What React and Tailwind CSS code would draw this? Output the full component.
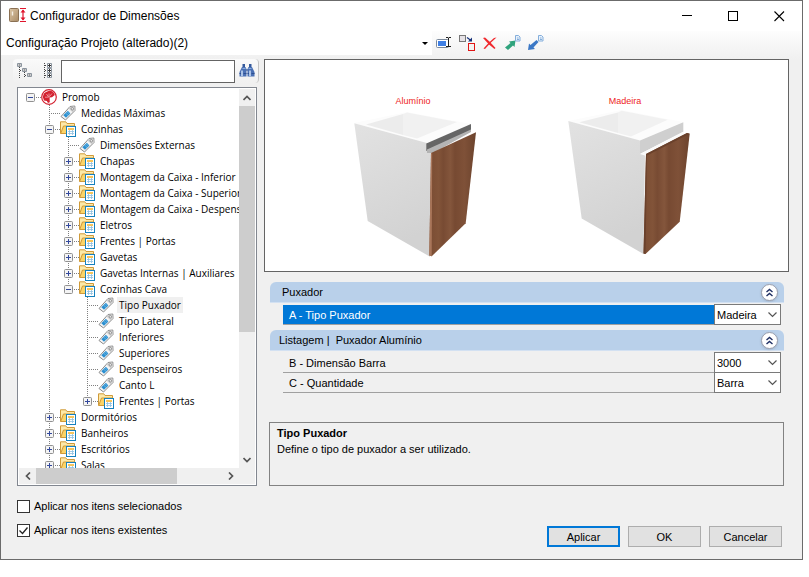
import React from 'react';
import clsx from 'clsx';

const TREE = [
  { label: 'Promob', icon: 'brand', guides: [], state: 'open', root: true, last: true },
  { label: 'Medidas Máximas', icon: 'tag', guides: [false] },
  { label: 'Cozinhas', icon: 'folder', guides: [false], state: 'open' },
  { label: 'Dimensões Externas', icon: 'tag', guides: [false, true] },
  { label: 'Chapas', icon: 'folder', guides: [false, true], state: 'closed' },
  { label: 'Montagem da Caixa - Inferior', icon: 'folder', guides: [false, true], state: 'closed' },
  { label: 'Montagem da Caixa - Superior', icon: 'folder', guides: [false, true], state: 'closed' },
  { label: 'Montagem da Caixa - Despenseiro', icon: 'folder', guides: [false, true], state: 'closed' },
  { label: 'Eletros', icon: 'folder', guides: [false, true], state: 'closed' },
  { label: 'Frentes | Portas', icon: 'folder', guides: [false, true], state: 'closed' },
  { label: 'Gavetas', icon: 'folder', guides: [false, true], state: 'closed' },
  { label: 'Gavetas Internas | Auxiliares', icon: 'folder', guides: [false, true], state: 'closed' },
  { label: 'Cozinhas Cava', icon: 'folder', guides: [false, true], state: 'open', last: true },
  { label: 'Tipo Puxador', icon: 'tag', guides: [false, true, false], selected: true },
  { label: 'Tipo Lateral', icon: 'tag', guides: [false, true, false] },
  { label: 'Inferiores', icon: 'tag', guides: [false, true, false] },
  { label: 'Superiores', icon: 'tag', guides: [false, true, false] },
  { label: 'Despenseiros', icon: 'tag', guides: [false, true, false] },
  { label: 'Canto L', icon: 'tag', guides: [false, true, false] },
  { label: 'Frentes | Portas', icon: 'folder', guides: [false, true, false], state: 'closed', last: true },
  { label: 'Dormitórios', icon: 'folder', guides: [false], state: 'closed' },
  { label: 'Banheiros', icon: 'folder', guides: [false], state: 'closed' },
  { label: 'Escritórios', icon: 'folder', guides: [false], state: 'closed' },
  { label: 'Salas', icon: 'folder', guides: [false], state: 'closed' },
];

function AppIcon() {
  return (
    <svg width="18" height="18" viewBox="0 0 18 18" className="shrink-0">
      <defs>
        <linearGradient id="door" x1="0" y1="0" x2="1" y2="1">
          <stop offset="0" stopColor="#dcc6a6" />
          <stop offset="1" stopColor="#a98b66" />
        </linearGradient>
      </defs>
      <rect x="0.5" y="1.5" width="9" height="13" rx="1" fill="url(#door)" stroke="#8a7053" />
      <path d="M3.5 4.500v4" stroke="#f5efe4" strokeWidth="1.4" />
      <path d="M11 1.5h6M11 14.500h6M14 3v10" stroke="#e0142c" strokeWidth="1.200" />
      <path d="M11.500 5.500L14 2.500l2.500 3zM11.500 10.500l2.500 3 2.500-3z" fill="#e0142c" />
    </svg>
  );
}

function BrandIcon() {
  return (
    <svg width="16" height="16" viewBox="0 0 16 16" className="shrink-0">
      <circle cx="8" cy="8" r="7.300" fill="#fff" stroke="#d3202f" strokeWidth="1.200" />
      <path d="M7.500 2C10 1.200 13.500 3 13.800 6L11 8.200 8.600 8.500 8.800 13.200 7 14 5.800 12 3 11.500 1.800 8 2.800 4.500 5 3z" fill="#d3202f" />
      <path d="M8 4.500v4M5.500 5l2 3M4 8.200h3.500M11 4.500l-2.500 3" stroke="#f7b9bd" strokeWidth="0.700" />
    </svg>
  );
}

function TagIcon() {
  return (
    <svg width="16" height="16" viewBox="0 0 16 16" className="shrink-0">
      <path d="M10 1.500L14.800 1 15 5.500 5.500 15 1 11.500z" fill="#f4f4f4" stroke="#8a8a8a" />
      <path d="M10 2l4.300-.6.200 3.900-2 2L8.500 3.500z" fill="#d2d2d2" />
      <circle cx="12.300" cy="3.800" r="1.200" fill="#fff" stroke="#777" strokeWidth="0.800" />
      <path d="M7.800 5.800l2.600 2.600-4.400 4.300-2.700-2.500z" fill="#2b8fd0" />
      <path d="M5.500 8l2.800 2.600M7 6.700l2.600 2.500" stroke="#84c4ea" strokeWidth="0.700" />
    </svg>
  );
}

function FolderIcon() {
  return (
    <svg width="16" height="16" viewBox="0 0 16 16" className="shrink-0">
      <path d="M.5 12.500V.8h5.300l1.200 1.700h7.500v3" fill="#fde9a8" stroke="#cf9a3a" />
      <path d="M.7 12.500L3.500 5h11.500v7.500z" fill="#fbd467" stroke="#cf9a3a" />
      <rect x="6.500" y="5.500" width="9" height="10" fill="#fff" stroke="#1681bd" />
      <path d="M8 8h6" stroke="#f5b733" strokeWidth="1.600" />
      <path d="M8 10.500h6M8 12.500h6M9.500 9v5M12.500 9v5" stroke="#8fc0e0" strokeWidth="0.800" />
    </svg>
  );
}

function Expander({ open }) {
  return (
    <g>
      <rect x="5.500" y="4.500" width="8" height="8" rx="1" fill="#f4f4f4" stroke="#919191" />
      <path d={open ? 'M7 8.500h5' : 'M7 8.500h5M9.500 6v5'} stroke="#32489c" />
    </g>
  );
}

// One 16px line of the tree: guides of the parents, own connector, icon, label
function TreeRow({ item }) {
  const { label, icon, guides, state, last, root, selected } = item;
  return (
    <li className="flex h-4 items-center whitespace-nowrap">
      {guides.map((on, i) => (
        <svg key={i} width="19" height="16" className="shrink-0">
          {on && <path d="M9.500 0v16" stroke="#808080" strokeDasharray="1 1" />}
        </svg>
      ))}
      <svg width="20" height="16" className="shrink-0">
        {!root && <path d={last ? 'M9.500 0v8' : 'M9.500 0v16'} stroke="#808080" strokeDasharray="1 1" />}
        <path d="M9 8.500h11" stroke="#808080" strokeDasharray="1 1" />
        {state && <Expander open={state === 'open'} />}
      </svg>
      {icon === 'brand' && <BrandIcon />}
      {icon === 'tag' && <TagIcon />}
      {icon === 'folder' && <FolderIcon />}
      <span className={clsx('ml-[3px] px-[2px] leading-4', selected && 'bg-[#f0f0f0]')}>{label}</span>
    </li>
  );
}

function Chevron({ d, size = 8 }) {
  return (
    <svg width={size} height={size} viewBox="0 0 8 8" fill="none">
      <path d={d} stroke="#555" strokeWidth="1.700" />
    </svg>
  );
}

function TreePanel() {
  return (
    <div className="ml-[4px] mr-[2px] mt-[4px] border border-[#828790] bg-white p-px">
      <div className="flex h-[379px]">
        <ul className="min-w-0 flex-1 overflow-hidden pl-[2px] font-['Open_Sans','Liberation_Sans',sans-serif] text-[10px]">
          {TREE.map((item, i) => (
            <TreeRow key={i} item={item} />
          ))}
        </ul>
        <div className="flex w-4 flex-col items-center bg-[#f0f0f0]">
          <button aria-label="Subir" className="flex h-[17px] items-center">
            <Chevron d="M.5 6L4 2.500 7.500 6" />
          </button>
          <div className="h-[226px] w-full bg-[#cdcdcd]" />
          <button aria-label="Descer" className="mt-auto flex h-[17px] items-center">
            <Chevron d="M.5 2L4 5.500 7.500 2" />
          </button>
        </div>
      </div>
      <div className="flex h-4 items-center bg-[#f0f0f0] pr-4">
        <button aria-label="Esquerda" className="flex w-[17px] justify-center">
          <Chevron d="M6 .5L2.500 4 6 7.500" />
        </button>
        <div className="h-full w-[141px] bg-[#cdcdcd]" />
        <button aria-label="Direita" className="ml-auto flex w-[17px] justify-center">
          <Chevron d="M2 .5L5.500 4 2 7.500" />
        </button>
      </div>
    </div>
  );
}

function SearchBar() {
  return (
    <div className="flex h-6 items-center rounded-sm border-r border-[#c4c4c4] bg-gradient-to-b from-[#fafafa] to-[#f0f0f0] pl-[4px]">
      <button aria-label="Recolher tudo">
        <svg width="16" height="16" fill="none">
          <path d="M2.500 4v11M3 7.500h3M7.500 9v6M8 12.500h3" stroke="#444" strokeDasharray="1 1" />
          <path d="M.5.500h4v3h-4zM5.500 5.500h4v3h-4zM10.500 10.500h4v3h-4z" fill="#fff" stroke="#8b949e" />
          <path d="M1.500 2h2M6.500 7h2M11.500 12h2" stroke="#333" />
        </svg>
      </button>
      <button aria-label="Expandir tudo" className="ml-[10px]">
        <svg width="10" height="16" fill="none">
          <path d="M1.500 0v16M2 2.500h3M2 7.500h3M2 12.500h3" stroke="#444" strokeDasharray="1 1" />
          <path d="M4.500.500h4v4h-4zM4.500 5.500h4v4h-4zM4.500 10.500h4v4h-4z" fill="#fff" stroke="#8b949e" />
          <path d="M5 2.500h3M6.500 1v3M5 7.500h3M6.500 6v3M5 12.500h3M6.500 11v3" stroke="#333" />
        </svg>
      </button>
      <input aria-label="Pesquisar" className="ml-[8px] h-[23px] w-[174px] border border-[#646464] bg-white px-1 outline-none" />
      <button aria-label="Localizar" className="ml-[4px]">
        <svg width="16" height="16" viewBox="0 0 16 16">
          <path d="M3 4h3.500L7.500 6v7.500H.5V9zM9.500 4H13l2.500 5v4.500h-7V6z" fill="#4a70b4" />
          <path d="M3.500 1h2.500v3H3.500zM10 1h2.500v3H10z" fill="#34599c" />
          <path d="M3 7.500v5.500M11 7.500v5.500" stroke="#c3d7f3" strokeWidth="1.600" />
          <path d="M3.500 5.500h3M9.500 5.500h3" stroke="#8daee0" />
          <path d="M.5 10.500h1.500M4.500 10.500h3M8.500 10.500h1.500M12.500 10.500h3M7 7h2" stroke="#2d4f90" />
        </svg>
      </button>
    </div>
  );
}

function Toolbar() {
  return (
    <div className="flex h-[28px] items-start bg-gradient-to-b from-[#fdfdfd] to-[#f0f0f0]">
      <div className="relative h-[24px] w-[431px] bg-white">
        <select aria-label="Configuração" className="h-full w-full appearance-none bg-white pl-[5px] text-[12px] outline-none">
          <option>Configuração Projeto (alterado)(2)</option>
        </select>
        <svg width="6" height="3" className="pointer-events-none absolute right-1 top-[11px]">
          <path d="M0 0h6L3 3z" fill="#000" />
        </svg>
      </div>
      <div className="flex h-[24px] items-center gap-[7px] pl-[4px]">
        <button aria-label="Renomear">
          <svg width="16" height="16" fill="none">
            <rect x="0.500" y="4.500" width="12" height="8" rx="1" fill="#fff" stroke="#7c8a9c" />
            <rect x="2" y="6" width="8" height="5" fill="#3f7fe4" />
            <path d="M10 2.500h2l.500.500.500-.500h2M12.500 3v8M10 11.500h5" stroke="#222" />
          </svg>
        </button>
        <button aria-label="Duplicar">
          <svg width="16" height="16" fill="none">
            <rect x="0.500" y="0.500" width="6" height="6" fill="#e6e2e6" stroke="#777" />
            <rect x="9.500" y="8.500" width="6" height="7" fill="#f3f3f3" stroke="#e01515" />
            <path d="M8 2.500l4 3" stroke="#16307a" strokeWidth="1.200" />
            <path d="M13 2.500v4H9z" fill="#16307a" />
          </svg>
        </button>
        <button aria-label="Excluir">
          <svg width="16" height="16" fill="none">
            <path d="M1 3l2-.5L8 7l5.500 6-1 1L7 9.500z" fill="#f0282d" />
            <path d="M14.500 2.500L8.500 8 3 14l-1.500-.5L6.500 8 12 3z" fill="#f0282d" />
          </svg>
        </button>
        <button aria-label="Exportar">
          <svg width="16" height="16">
            <path d="M0 12.500L5.500 8 4 6.500 10.500 5.500 9.500 12 8 10.500 3 15z" fill="#2fa37c" />
            <path d="M10.500.500h3l1.500 1.500v4h-4.500z" fill="#e8f1fb" stroke="#84aedb" />
            <path d="M12 3h1.500M12 4.500h2" stroke="#84aedb" />
          </svg>
        </button>
        <button aria-label="Importar">
          <svg width="16" height="16">
            <path d="M0 15L1 8.500 2.500 10 8.500 5l2 2-5 5.500L7 14z" fill="#3b78c6" />
            <path d="M10.500.500h3l1.500 1.500v4h-4.500z" fill="#e8f1fb" stroke="#84aedb" />
            <path d="M12 3h1.500M12 4.500h2" stroke="#84aedb" />
          </svg>
        </button>
      </div>
    </div>
  );
}

function TitleBar() {
  return (
    <header className="flex h-[30px] items-center bg-white pl-[8px] text-[12px]">
      <AppIcon />
      <h1 className="ml-[3px]">Configurador de Dimensões</h1>
      <div className="ml-auto flex h-full">
        <button aria-label="Minimizar" className="flex w-[46px] items-center justify-center">
          <svg width="11" height="11"><path d="M0 4.500h10" stroke="#000" /></svg>
        </button>
        <button aria-label="Maximizar" className="flex w-[46px] items-center justify-center">
          <svg width="11" height="11" fill="none"><rect x="0.500" y="0.500" width="9" height="9" stroke="#000" /></svg>
        </button>
        <button aria-label="Fechar" className="flex w-[46px] items-center justify-center">
          <svg width="11" height="11"><path d="M.5.500l9.500 9.500M10 .500L.500 10" stroke="#000" strokeWidth="1.100" /></svg>
        </button>
      </div>
    </header>
  );
}

function Preview() {
  return (
    <div className="border border-[#646464] bg-white">
      <svg viewBox="265 60 523 211" className="block w-full">
        <defs>
          <linearGradient id="wood" x1="0" y1="0" x2="1" y2="0">
            <stop offset="0" stopColor="#7a4c33" />
            <stop offset="0.200" stopColor="#825439" />
            <stop offset="0.300" stopColor="#784b33" />
            <stop offset="0.450" stopColor="#84563c" />
            <stop offset="0.550" stopColor="#774a32" />
            <stop offset="0.750" stopColor="#7f5138" />
            <stop offset="1" stopColor="#6c432d" />
          </linearGradient>
          <linearGradient id="side" x1="0" y1="0" x2="0.300" y2="1">
            <stop offset="0" stopColor="#e2e2e2" />
            <stop offset="1" stopColor="#d2d2d2" />
          </linearGradient>
        </defs>
        <g fontFamily="Liberation Sans, Arial, sans-serif" fontSize="9" fill="#ee1c24" textAnchor="middle">
          <text x="413" y="104">Alumínio</text>
          <text x="625" y="104">Madeira</text>
        </g>

        <path d="M354 123L407 112 471 124 427 143z" fill="#fcfcfc" />
        <path d="M366 124.500L403 114V135z" fill="#ececec" />
        <path d="M403 114L407 112.500 457 122 417 138.500 403 135z" fill="#f1f1f1" />
        <path d="M354.300 123.300L427 143 427 152 431 153 430 256.700 367.700 221z" fill="url(#side)" />
        <path d="M426.300 143.500L471 124V131L433 149 426.300 151z" fill="#666" />
        <path d="M427 149.500L471 129.500V132L433 153H427z" fill="#b4b4b4" />
        <path d="M431 153L476 132.300 465.700 223.300 431.700 256.300 429.300 255.500z" fill="url(#wood)" />
        <path d="M431 153L432.200 153.500 431.700 256.300 429.300 255.500z" fill="#a9765a" />

        <path d="M568.300 121L621.700 110 683 122 640 140.500z" fill="#fcfcfc" />
        <path d="M579.300 122.300L618 112.500V133z" fill="#ececec" />
        <path d="M618 112.500L621.700 110.700 667.700 119.700 631 136.500 618 133z" fill="#f1f1f1" />
        <path d="M640 140.500L683.300 122.300V131.700L640 154z" fill="#cfcfcf" />
        <path d="M640 154L683.300 131.700 684 135 646 155z" fill="#fafafa" />
        <path d="M568.300 121L640 140.500V154L645 155.500 643.500 254 581.700 218.500z" fill="url(#side)" />
        <path d="M646 154L687 133 689.700 133.700 679.700 221.700 645.500 254 643.500 253.500z" fill="url(#wood)" />
        <path d="M646 154L687 133 689.700 133.700 647 155.500 645.500 254 643.500 253.500z" fill="#6a412c" />
      </svg>
    </div>
  );
}

function GroupHeader({ title, className }) {
  return (
    <div className={clsx('flex h-[21px] items-center rounded-t-md border-b border-[#d3e1f2] bg-[#b9d0ea] pr-[6px]', className)}>
      <h2>{title}</h2>
      <button aria-label={`Recolher ${title}`} className="ml-auto flex size-[17px] items-center justify-center rounded-full border border-[#9a9fae] bg-white shadow-sm">
        <svg width="9" height="9" fill="none">
          <path d="M1.500 4L4.500 1.500 7.500 4M1.500 8L4.500 5.500 7.500 8" stroke="#1f2f63" strokeWidth="1.400" />
        </svg>
      </button>
    </div>
  );
}

function PropertyRow({ id, label, value, active }) {
  return (
    <div className="ml-[13px] mr-[3px] flex h-5">
      <label
        htmlFor={id}
        className={clsx(
          'flex flex-1 items-center border-b border-[#a0a0a0] pl-[6px]',
          active && 'bg-[#0078d7] text-white'
        )}
      >
        {label}
      </label>
      <div className="relative -mt-px h-[21px] w-[67px]">
        <select id={id} className="block h-full w-full appearance-none border border-[#7a7a7a] bg-white pl-[2px] outline-none">
          <option>{value}</option>
        </select>
        <svg width="9" height="6" fill="none" className="pointer-events-none absolute right-1 top-2">
          <path d="M.500.500l4 4 4-4" stroke="#555" strokeWidth="1.200" />
        </svg>
      </div>
    </div>
  );
}

function ApplyOption({ label, checked }) {
  return (
    <label className="flex h-4 items-center">
      <span className="relative size-[13px]">
        <input type="checkbox" defaultChecked={checked} className="peer block size-[13px] appearance-none border border-[#333] bg-white" />
        <svg width="13" height="13" fill="none" className="pointer-events-none absolute inset-0 hidden peer-checked:block">
          <path d="M2.500 6.500l3 3 5-6" stroke="#222" strokeWidth="1.300" />
        </svg>
      </span>
      <span className="ml-[4px]">{label}</span>
    </label>
  );
}

function DialogButton({ children, primary }) {
  return (
    <button
      className={clsx(
        'h-[21px] w-[73px] bg-[#e1e1e1]',
        primary ? 'border-2 border-[#0078d7]' : 'border border-[#adadad]'
      )}
    >
      {children}
    </button>
  );
}

export default function App() {
  return (
    <div className="min-h-screen bg-white pr-[6px] font-['Liberation_Sans',Arial,sans-serif] text-[11px] leading-4 text-black">
      <div className="border border-[#6b6b6b] bg-[#f0f0f0] pb-[12px]">
        <TitleBar />
        <Toolbar />
        <main className="flex gap-[5px] pl-[12px] pr-[13px]">
          <aside className="w-[246px] shrink-0">
            <SearchBar />
            <TreePanel />
          </aside>
          <section className="flex min-w-0 flex-1 flex-col">
            <Preview />
            <div className="ml-[6px] mr-[5px] mt-[10px]">
              <GroupHeader title="Puxador" className="pl-[12px]" />
              <div className="pt-[2px]">
                <PropertyRow id="tipo" label="A - Tipo Puxador" value="Madeira" active />
              </div>
              <GroupHeader title="Listagem |  Puxador Alumínio" className="mt-[5px] whitespace-pre pl-[9px]" />
              <div className="pt-[2px]">
                <PropertyRow id="dimensao" label="B - Dimensão Barra" value="3000" />
                <PropertyRow id="quantidade" label="C - Quantidade" value="Barra" />
              </div>
            </div>
            <div className="ml-[5px] mr-[5px] mt-auto h-[64px] border border-[#828282] px-[7px] pt-[2px]">
              <h3 className="font-bold">Tipo Puxador</h3>
              <p>Define o tipo de puxador a ser utilizado.</p>
            </div>
          </section>
        </main>
        <footer className="flex items-end justify-between pl-[16px] pr-[20px] pt-[12px]">
          <div className="flex flex-col gap-[8px] pb-[9px]">
            <ApplyOption label="Aplicar nos itens selecionados" />
            <ApplyOption label="Aplicar nos itens existentes" checked />
          </div>
          <div className="flex gap-[8px]">
            <DialogButton primary>Aplicar</DialogButton>
            <DialogButton>OK</DialogButton>
            <DialogButton>Cancelar</DialogButton>
          </div>
        </footer>
      </div>
    </div>
  );
}
